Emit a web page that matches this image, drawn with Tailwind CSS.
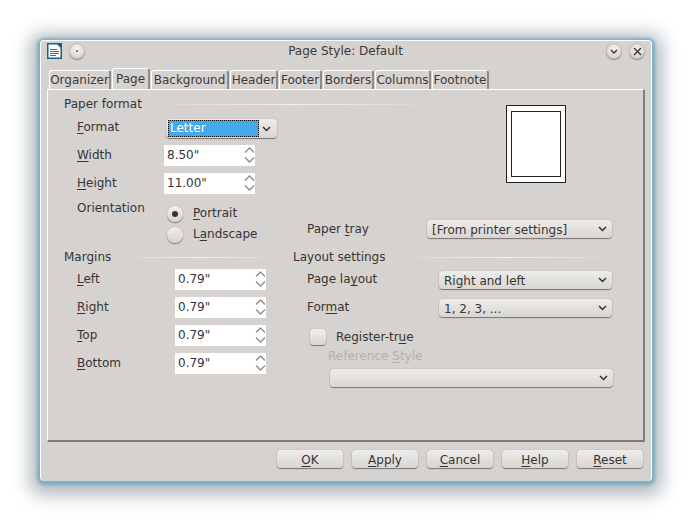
<!DOCTYPE html>
<html lang="en">
<head>
    <meta charset="UTF-8">
    <title>Page Style: Default</title>
    <script src="https://cdn.jsdelivr.net/npm/@tailwindcss/browser@4"></script>
</head>
<body class="bg-white w-[692px] h-[521px] overflow-hidden pt-[40px] pl-[40px] font-['DejaVu_Sans',sans-serif] text-[12px] leading-[14px] text-[#353535]">
    <!-- window -->
    <div class="w-[612px] h-[441px] bg-[#d6d2cf] border border-b-0 border-white rounded-[4px] flex flex-col shadow-[0_1px_3px_3px_#7eafc9,0_4px_18px_10px_rgba(70,85,100,0.42)]">

        <!-- title bar -->
        <div class="h-[27px] shrink-0 flex items-center pl-[6px] pr-[6px] pb-[7px]">
            <svg class="w-[15px] h-[16px]" viewBox="0 0 15 16">
                <path d="M0.75 0.75H10.5L14.25 4.5V15.25H0.75Z" fill="#fff" stroke="#17608f" stroke-width="1.5"/>
                <path d="M9.5 0H15V5.5Z" fill="#17608f"/>
                <path d="M3 6.5H10M3 8.5H12M3 10.5H12M3 12.5H9" stroke="#2b74a3" stroke-width="1"/>
            </svg>
            <div class="ml-[7px] w-[16px] h-[16px] rounded-full bg-[radial-gradient(circle_at_50%_35%,#f4f3f2,#cfccc9)] border border-[#c0bcb9] shadow-[0_1px_1px_#8a8785] flex items-center justify-center">
                <div class="w-[2px] h-[2px] rounded-full bg-[#555]"></div>
            </div>
            <div class="flex-1 text-center pl-[9px] pr-[9px] text-[#3a3a3a]">Page Style: Default</div>
            <div class="w-[16px] h-[16px] rounded-full bg-[radial-gradient(circle_at_50%_35%,#f4f3f2,#cfccc9)] border border-[#c0bcb9] shadow-[0_1px_1px_#8a8785] flex items-center justify-center">
                <svg class="w-[8px] h-[5px]" viewBox="0 0 8 5"><path d="M1 1L4 4L7 1" fill="none" stroke="#333" stroke-width="1.4"/></svg>
            </div>
            <div class="ml-[7px] w-[16px] h-[16px] rounded-full bg-[radial-gradient(circle_at_50%_35%,#f4f3f2,#cfccc9)] border border-[#c0bcb9] shadow-[0_1px_1px_#8a8785] flex items-center justify-center">
                <svg class="w-[9px] h-[9px]" viewBox="0 0 9 9"><path d="M1 1L8 8M8 1L1 8" fill="none" stroke="#333" stroke-width="1.4"/></svg>
            </div>
        </div>

        <!-- tabs -->
        <div class="h-[21px] shrink-0 flex items-end pl-[8px] text-[#3a3a3a]">
            <div class="w-[62px] h-[19px] mr-[1px] flex items-center justify-center border-t border-l border-white border-r-2 border-r-[#8f8b87] rounded-t-[3px]">Organizer</div>
            <div class="w-[38px] h-[21px] mr-[1px] pb-[1px] flex items-center justify-center border-t border-l border-white border-r-2 border-r-[#8f8b87] rounded-t-[3px]">Page</div>
            <div class="w-[78px] h-[19px] mr-[1px] flex items-center justify-center border-t border-l border-white border-r-2 border-r-[#8f8b87] rounded-t-[3px]">Background</div>
            <div class="w-[48px] h-[19px] mr-[1px] flex items-center justify-center border-t border-l border-white border-r-2 border-r-[#8f8b87] rounded-t-[3px]">Header</div>
            <div class="w-[43px] h-[19px] mr-[1px] flex items-center justify-center border-t border-l border-white border-r-2 border-r-[#8f8b87] rounded-t-[3px]">Footer</div>
            <div class="w-[51px] h-[19px] mr-[1px] flex items-center justify-center border-t border-l border-white border-r-2 border-r-[#8f8b87] rounded-t-[3px]">Borders</div>
            <div class="w-[56px] h-[19px] mr-[1px] flex items-center justify-center border-t border-l border-white border-r-2 border-r-[#8f8b87] rounded-t-[3px]">Columns</div>
            <div class="w-[57px] h-[19px] flex items-center justify-center border-t border-l border-white border-r-2 border-r-[#8f8b87] rounded-t-[3px]">Footnote</div>
        </div>

        <!-- page panel -->
        <div class="ml-[6px] w-[598px] h-[353px] shrink-0 border-t border-l border-white border-r-2 border-b-2 border-r-[#7f7b76] border-b-[#7f7b76]">

            <!-- paper format + preview -->
            <div class="h-[159px] flex">
                <div class="w-[245px] shrink-0 pl-[16px] pt-[6px]">
                    <div class="h-[16px] flex items-center">
                        <span class="shrink-0 -mt-[1px]">Paper format</span>
                        <div class="ml-[7px] w-[287px] h-[1px] shrink-0 bg-gradient-to-r from-transparent via-[#f3f2f0] to-transparent"></div>
                    </div>
                    <div class="mt-[7px] h-[19px] flex items-center pl-[13px]">
                        <span class="w-[89px] shrink-0 -mt-[3px]"><u class="underline-offset-2">F</u>ormat</span>
                        <div class="w-[111px] h-[19px] shrink-0 flex items-center rounded-[4px] bg-gradient-to-b from-[#eeedeb] to-[#d8d5d2] shadow-[0_1px_1px_#77736f,0_0_1px_#8a8785] pl-[2px]">
                            <div class="w-[91px] h-[17px] bg-[#44a9e8] border border-dotted border-black pl-[1px] leading-[15px] text-white">Letter</div>
                            <svg class="ml-[3px] w-[9px] h-[6px]" viewBox="0 0 9 6"><path d="M1 1L4.5 4.5L8 1" fill="none" stroke="#333" stroke-width="1.5"/></svg>
                        </div>
                    </div>
                    <div class="mt-[7px] h-[21px] flex items-center pl-[13px]">
                        <span class="w-[87px] shrink-0 -mt-[2px]"><u class="underline-offset-2">W</u>idth</span>
                        <div class="w-[91px] h-[21px] shrink-0 bg-white flex items-center justify-between pl-[3px]">
                            <span class="-mt-[1px]">8.50"</span>
                            <svg class="w-[11px] h-[21px]" viewBox="0 0 11 21"><path d="M1 7.5L5.5 3L10 7.5M1 12.5L5.5 17L10 12.5" fill="none" stroke="#8c8c8c" stroke-width="1.3"/></svg>
                        </div>
                    </div>
                    <div class="mt-[7px] h-[21px] flex items-center pl-[13px]">
                        <span class="w-[87px] shrink-0 -mt-[2px]"><u class="underline-offset-2">H</u>eight</span>
                        <div class="w-[91px] h-[21px] shrink-0 bg-white flex items-center justify-between pl-[3px]">
                            <span class="-mt-[1px]">11.00"</span>
                            <svg class="w-[11px] h-[21px]" viewBox="0 0 11 21"><path d="M1 7.5L5.5 3L10 7.5M1 12.5L5.5 17L10 12.5" fill="none" stroke="#8c8c8c" stroke-width="1.3"/></svg>
                        </div>
                    </div>
                    <div class="mt-[9px] flex pl-[13px]">
                        <span class="w-[87px] shrink-0 -mt-[2px]">Orientation</span>
                        <div>
                            <div class="h-[21px] flex items-center pl-[3px]">
                                <div class="mt-[1px] w-[16px] h-[16px] rounded-full bg-gradient-to-b from-[#f0efed] to-[#d6d3d0] shadow-[0_1px_1px_#77736f,0_0_1px_#8a8785] flex items-center justify-center">
                                    <div class="w-[6px] h-[6px] rounded-full bg-[#333]"></div>
                                </div>
                                <span class="ml-[10px] -mt-[1px]"><u class="underline-offset-2">P</u>ortrait</span>
                            </div>
                            <div class="h-[21px] flex items-center pl-[3px]">
                                <div class="mt-[1px] w-[16px] h-[16px] rounded-full bg-gradient-to-b from-[#f0efed] to-[#d6d3d0] shadow-[0_1px_1px_#77736f,0_0_1px_#8a8785]"></div>
                                <span class="ml-[10px] -mt-[1px]">L<u class="underline-offset-2">a</u>ndscape</span>
                            </div>
                        </div>
                    </div>
                </div>
                <div class="flex-1 pt-[15px]">
                    <div class="ml-[213px] w-[60px] h-[78px] bg-white border border-[#222] flex items-center justify-center">
                        <div class="w-[50px] h-[66px] border border-[#222]"></div>
                    </div>
                    <div class="mt-[37px] pl-[14px] flex items-center">
                        <span class="w-[120px] shrink-0 -mt-[1px]">Paper <u class="underline-offset-2">t</u>ray</span>
                        <div class="w-[185px] h-[18px] shrink-0 flex items-center justify-between rounded-[4px] bg-gradient-to-b from-[#eeedeb] to-[#d8d5d2] shadow-[0_1px_1px_#77736f,0_0_1px_#8a8785] pl-[5px] pr-[5px]">
                            <span class="mt-[1px]">[From printer settings]</span>
                            <svg class="w-[9px] h-[6px]" viewBox="0 0 9 6"><path d="M1 1L4.5 4.5L8 1" fill="none" stroke="#333" stroke-width="1.5"/></svg>
                        </div>
                    </div>
                </div>
            </div>

            <!-- margins + layout settings -->
            <div class="flex">
                <div class="w-[245px] shrink-0 pl-[16px]">
                    <div class="h-[16px] flex items-center">
                        <span class="shrink-0">Margins</span>
                        <div class="ml-[7px] w-[162px] h-[1px] shrink-0 bg-gradient-to-r from-transparent via-[#f3f2f0] to-transparent"></div>
                    </div>
                    <div class="mt-[4px] h-[21px] flex items-center pl-[13px]">
                        <span class="w-[98px] shrink-0 -mt-[2px]"><u class="underline-offset-2">L</u>eft</span>
                        <div class="w-[91px] h-[21px] shrink-0 bg-white flex items-center justify-between pl-[3px]">
                            <span class="-mt-[1px]">0.79"</span>
                            <svg class="w-[11px] h-[21px]" viewBox="0 0 11 21"><path d="M1 7.5L5.5 3L10 7.5M1 12.5L5.5 17L10 12.5" fill="none" stroke="#8c8c8c" stroke-width="1.3"/></svg>
                        </div>
                    </div>
                    <div class="mt-[7px] h-[21px] flex items-center pl-[13px]">
                        <span class="w-[98px] shrink-0 -mt-[2px]"><u class="underline-offset-2">R</u>ight</span>
                        <div class="w-[91px] h-[21px] shrink-0 bg-white flex items-center justify-between pl-[3px]">
                            <span class="-mt-[1px]">0.79"</span>
                            <svg class="w-[11px] h-[21px]" viewBox="0 0 11 21"><path d="M1 7.5L5.5 3L10 7.5M1 12.5L5.5 17L10 12.5" fill="none" stroke="#8c8c8c" stroke-width="1.3"/></svg>
                        </div>
                    </div>
                    <div class="mt-[7px] h-[21px] flex items-center pl-[13px]">
                        <span class="w-[98px] shrink-0 -mt-[2px]"><u class="underline-offset-2">T</u>op</span>
                        <div class="w-[91px] h-[21px] shrink-0 bg-white flex items-center justify-between pl-[3px]">
                            <span class="-mt-[1px]">0.79"</span>
                            <svg class="w-[11px] h-[21px]" viewBox="0 0 11 21"><path d="M1 7.5L5.5 3L10 7.5M1 12.5L5.5 17L10 12.5" fill="none" stroke="#8c8c8c" stroke-width="1.3"/></svg>
                        </div>
                    </div>
                    <div class="mt-[7px] h-[21px] flex items-center pl-[13px]">
                        <span class="w-[98px] shrink-0 -mt-[2px]"><u class="underline-offset-2">B</u>ottom</span>
                        <div class="w-[91px] h-[21px] shrink-0 bg-white flex items-center justify-between pl-[3px]">
                            <span class="-mt-[1px]">0.79"</span>
                            <svg class="w-[11px] h-[21px]" viewBox="0 0 11 21"><path d="M1 7.5L5.5 3L10 7.5M1 12.5L5.5 17L10 12.5" fill="none" stroke="#8c8c8c" stroke-width="1.3"/></svg>
                        </div>
                    </div>
                </div>
                <div class="flex-1">
                    <div class="h-[16px] flex items-center">
                        <span class="shrink-0">Layout settings</span>
                        <div class="ml-[8px] w-[225px] h-[1px] shrink-0 bg-gradient-to-r from-transparent via-[#f3f2f0] to-transparent"></div>
                    </div>
                    <div class="mt-[6px] pl-[14px] flex items-center">
                        <span class="w-[132px] shrink-0 -mt-[2px]">Page la<u class="underline-offset-2">y</u>out</span>
                        <div class="w-[173px] h-[18px] shrink-0 flex items-center justify-between rounded-[4px] bg-gradient-to-b from-[#eeedeb] to-[#d8d5d2] shadow-[0_1px_1px_#77736f,0_0_1px_#8a8785] pl-[5px] pr-[5px]">
                            <span class="mt-[1px]">Right and left</span>
                            <svg class="w-[9px] h-[6px]" viewBox="0 0 9 6"><path d="M1 1L4.5 4.5L8 1" fill="none" stroke="#333" stroke-width="1.5"/></svg>
                        </div>
                    </div>
                    <div class="mt-[10px] pl-[14px] flex items-center">
                        <span class="w-[132px] shrink-0 -mt-[2px]">For<u class="underline-offset-2">m</u>at</span>
                        <div class="w-[173px] h-[18px] shrink-0 flex items-center justify-between rounded-[4px] bg-gradient-to-b from-[#eeedeb] to-[#d8d5d2] shadow-[0_1px_1px_#77736f,0_0_1px_#8a8785] pl-[5px] pr-[5px]">
                            <span class="mt-[1px]">1, 2, 3, ...</span>
                            <svg class="w-[9px] h-[6px]" viewBox="0 0 9 6"><path d="M1 1L4.5 4.5L8 1" fill="none" stroke="#333" stroke-width="1.5"/></svg>
                        </div>
                    </div>
                    <div class="mt-[12px] pl-[17px] flex items-center">
                        <div class="w-[16px] h-[16px] rounded-[4px] bg-gradient-to-b from-[#f0efed] to-[#d8d5d2] shadow-[0_1px_1px_#77736f,0_0_1px_#8a8785]"></div>
                        <span class="ml-[10px]">Register-tr<u class="underline-offset-2">u</u>e</span>
                    </div>
                    <div class="mt-[4px] ml-[35px] text-[#b4b0ad]">Reference <u class="underline-offset-2">S</u>tyle</div>
                    <div class="mt-[6px] ml-[37px] w-[283px] h-[18px] flex items-center justify-end rounded-[4px] bg-gradient-to-b from-[#eeedeb] to-[#d8d5d2] shadow-[0_1px_1px_#77736f,0_0_1px_#8a8785] pr-[5px]">
                        <svg class="w-[9px] h-[6px]" viewBox="0 0 9 6"><path d="M1 1L4.5 4.5L8 1" fill="none" stroke="#333" stroke-width="1.5"/></svg>
                    </div>
                </div>
            </div>
        </div>

        <!-- buttons -->
        <div class="mt-[8px] pr-[8px] flex justify-end gap-[9px]">
            <button class="w-[66px] h-[18px] pt-[1px] rounded-[4px] bg-gradient-to-b from-[#eeedeb] to-[#d8d5d2] shadow-[0_1px_1px_#77736f,0_0_1px_#8a8785] text-center"><u class="underline-offset-2">O</u>K</button>
            <button class="w-[66px] h-[18px] pt-[1px] rounded-[4px] bg-gradient-to-b from-[#eeedeb] to-[#d8d5d2] shadow-[0_1px_1px_#77736f,0_0_1px_#8a8785] text-center"><u class="underline-offset-2">A</u>pply</button>
            <button class="w-[66px] h-[18px] pt-[1px] rounded-[4px] bg-gradient-to-b from-[#eeedeb] to-[#d8d5d2] shadow-[0_1px_1px_#77736f,0_0_1px_#8a8785] text-center"><u class="underline-offset-2">C</u>ancel</button>
            <button class="w-[66px] h-[18px] pt-[1px] rounded-[4px] bg-gradient-to-b from-[#eeedeb] to-[#d8d5d2] shadow-[0_1px_1px_#77736f,0_0_1px_#8a8785] text-center"><u class="underline-offset-2">H</u>elp</button>
            <button class="w-[66px] h-[18px] pt-[1px] rounded-[4px] bg-gradient-to-b from-[#eeedeb] to-[#d8d5d2] shadow-[0_1px_1px_#77736f,0_0_1px_#8a8785] text-center"><u class="underline-offset-2">R</u>eset</button>
        </div>
    </div>
</body>
</html>
